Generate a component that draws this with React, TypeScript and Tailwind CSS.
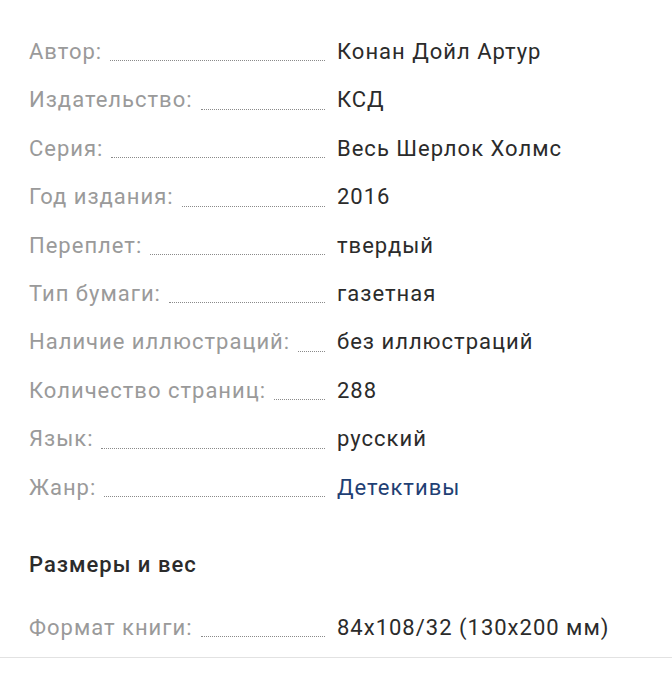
import React from "react";

const rows: { label: string; value: string; link?: boolean }[] = [
  { label: "Автор:", value: "Конан Дойл Артур" },
  { label: "Издательство:", value: "КСД" },
  { label: "Серия:", value: "Весь Шерлок Холмс" },
  { label: "Год издания:", value: "2016" },
  { label: "Переплет:", value: "твердый" },
  { label: "Тип бумаги:", value: "газетная" },
  { label: "Наличие иллюстраций:", value: "без иллюстраций" },
  { label: "Количество страниц:", value: "288" },
  { label: "Язык:", value: "русский" },
  { label: "Жанр:", value: "Детективы", link: true },
];

const Row = ({ label, value, link }: { label: string; value: string; link?: boolean }) => (
  <div className="flex items-end py-[10px] leading-[28.4px] text-[22px] tracking-[1px]">
    <div className="flex w-[296px] shrink-0 items-end">
      <span className="text-[#9a9a9a] whitespace-nowrap">{label}</span>
      <span className="ml-2 mb-[5px] flex-1 border-b border-dotted border-[#8a8a8a]" />
    </div>
    <span className={`ml-3 whitespace-nowrap ${link ? "text-[#1f3f74]" : "text-[#2b2b2b]"}`}>
      {value}
    </span>
  </div>
);

export default function App() {
  return (
    <div className="w-[672px] h-[700px] bg-white font-['Roboto',sans-serif]">
      <div className="pl-[29px] pt-[28px]">
        {rows.map((r) => (
          <Row key={r.label} {...r} />
        ))}
        <h3 className="mt-[39px] mb-[25px] text-[22px] tracking-[1px] leading-[28px] font-medium text-[#2b2b2b]">
          Размеры и вес
        </h3>
        <Row label="Формат книги:" value="84x108/32 (130x200 мм)" />
      </div>
      <div className="mt-[5px] border-b border-[#e2e2e2]" />
    </div>
  );
}
